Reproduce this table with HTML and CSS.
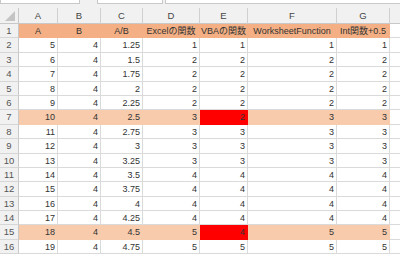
FILE: index.html
```html
<!DOCTYPE html>
<html>
<head>
<meta charset="utf-8">
<link rel="stylesheet" href="styles.css">
</head>
<body>
<div class="topbar">
  <div class="box namebox"></div>
  <div class="box fxbox"></div>
  <div class="box formula"></div>
</div>
<div class="sheet">
  <div class="corner"><span class="tri"></span></div>
  <div class="ch">A</div><div class="ch">B</div><div class="ch">C</div><div class="ch">D</div><div class="ch">E</div><div class="ch">F</div><div class="ch">G</div><div class="ch ch-h"></div>

  <div class="rh">1</div>
  <div class="c t hd">A</div><div class="c t hd">B</div><div class="c t hd">A/B</div><div class="c t hd">Excelの関数</div><div class="c t hd">VBAの関数</div><div class="c t hd">WorksheetFunction</div><div class="c t hd">Int関数+0.5</div><div class="c ex"></div>

  <div class="rh">2</div>
  <div class="c">5</div><div class="c">4</div><div class="c">1.25</div><div class="c">1</div><div class="c">1</div><div class="c">1</div><div class="c">1</div><div class="c ex"></div>

  <div class="rh">3</div>
  <div class="c">6</div><div class="c">4</div><div class="c">1.5</div><div class="c">2</div><div class="c">2</div><div class="c">2</div><div class="c">2</div><div class="c ex"></div>

  <div class="rh">4</div>
  <div class="c">7</div><div class="c">4</div><div class="c">1.75</div><div class="c">2</div><div class="c">2</div><div class="c">2</div><div class="c">2</div><div class="c ex"></div>

  <div class="rh">5</div>
  <div class="c">8</div><div class="c">4</div><div class="c">2</div><div class="c">2</div><div class="c">2</div><div class="c">2</div><div class="c">2</div><div class="c ex"></div>

  <div class="rh">6</div>
  <div class="c">9</div><div class="c">4</div><div class="c">2.25</div><div class="c">2</div><div class="c">2</div><div class="c">2</div><div class="c">2</div><div class="c ex"></div>

  <div class="rh">7</div>
  <div class="c hl">10</div><div class="c hl">4</div><div class="c hl">2.5</div><div class="c hl">3</div><div class="c red">2</div><div class="c hl">3</div><div class="c hl">3</div><div class="c ex"></div>

  <div class="rh">8</div>
  <div class="c">11</div><div class="c">4</div><div class="c">2.75</div><div class="c">3</div><div class="c">3</div><div class="c">3</div><div class="c">3</div><div class="c ex"></div>

  <div class="rh">9</div>
  <div class="c">12</div><div class="c">4</div><div class="c">3</div><div class="c">3</div><div class="c">3</div><div class="c">3</div><div class="c">3</div><div class="c ex"></div>

  <div class="rh">10</div>
  <div class="c">13</div><div class="c">4</div><div class="c">3.25</div><div class="c">3</div><div class="c">3</div><div class="c">3</div><div class="c">3</div><div class="c ex"></div>

  <div class="rh">11</div>
  <div class="c">14</div><div class="c">4</div><div class="c">3.5</div><div class="c">4</div><div class="c">4</div><div class="c">4</div><div class="c">4</div><div class="c ex"></div>

  <div class="rh">12</div>
  <div class="c">15</div><div class="c">4</div><div class="c">3.75</div><div class="c">4</div><div class="c">4</div><div class="c">4</div><div class="c">4</div><div class="c ex"></div>

  <div class="rh">13</div>
  <div class="c">16</div><div class="c">4</div><div class="c">4</div><div class="c">4</div><div class="c">4</div><div class="c">4</div><div class="c">4</div><div class="c ex"></div>

  <div class="rh">14</div>
  <div class="c">17</div><div class="c">4</div><div class="c">4.25</div><div class="c">4</div><div class="c">4</div><div class="c">4</div><div class="c">4</div><div class="c ex"></div>

  <div class="rh">15</div>
  <div class="c hl">18</div><div class="c hl">4</div><div class="c hl">4.5</div><div class="c hl">5</div><div class="c red">4</div><div class="c hl">5</div><div class="c hl">5</div><div class="c ex"></div>

  <div class="rh">16</div>
  <div class="c">19</div><div class="c">4</div><div class="c">4.75</div><div class="c">5</div><div class="c">5</div><div class="c">5</div><div class="c">5</div><div class="c ex"></div>
</div>
</body>
</html>
```

FILE: styles.css
```css
* { box-sizing: border-box; }
html, body {
  margin: 0;
  padding: 0;
  width: 400px;
  height: 255px;
  overflow: hidden;
  background: #ffffff;
  font-family: "Liberation Sans", "Noto Sans CJK JP", sans-serif;
  font-size: 9px;
  color: #333333;
}
.topbar {
  height: 8px;
  background: #f1f1f1;
  display: flex;
  align-items: flex-start;
}
.box {
  height: 4px;
  background: #ffffff;
  border: 1px solid #c8c8c8;
  border-top: none;
}
.namebox { width: 80px; }
.fxbox { width: 66px; margin-left: 17px; }
.formula { flex: 1; margin-left: 2px; border-right: none; }

.sheet {
  display: grid;
  grid-template-columns: 19px 39px 43px 42px 57px 48px 89px 53px 10px;
  grid-template-rows: 16px repeat(16, 14.4px);
}
.corner {
  background: #f1f1f1;
  border-right: 1px solid #c8c8c8;
  border-bottom: 1px solid #c8c8c8;
  position: relative;
}
.tri {
  position: absolute;
  right: 3px;
  bottom: 2px;
  width: 0;
  height: 0;
  border-left: 10px solid transparent;
  border-bottom: 10px solid #c4c4c4;
}
.ch {
  background: #f1f1f1;
  border-right: 1px solid #d0d0d0;
  border-bottom: 1px solid #c8c8c8;
  color: #444444;
  text-align: center;
  line-height: 15px;
  font-size: 9.5px;
}
.ch-h { border-right: none; }
.rh {
  background: #f1f1f1;
  border-right: 1px solid #c8c8c8;
  border-bottom: 1px solid #d6d6d6;
  color: #555555;
  text-align: center;
  line-height: 14px;
  font-size: 9.5px;
}
.c {
  border-right: 1px solid #dadada;
  border-bottom: 1px solid #dadada;
  text-align: right;
  padding-right: 2px;
  line-height: 14px;
  white-space: nowrap;
  overflow: hidden;
}
.t { text-align: center; padding-right: 0; }
.hd {
  background: #f4b084;
  border-color: #f4b084;
}
.hl {
  background: #f8cbad;
  border-color: #f8cbad;
}
.red {
  background: #ff0000;
  border-color: #ff0000;
}
.ex { border-right: none; }
```
